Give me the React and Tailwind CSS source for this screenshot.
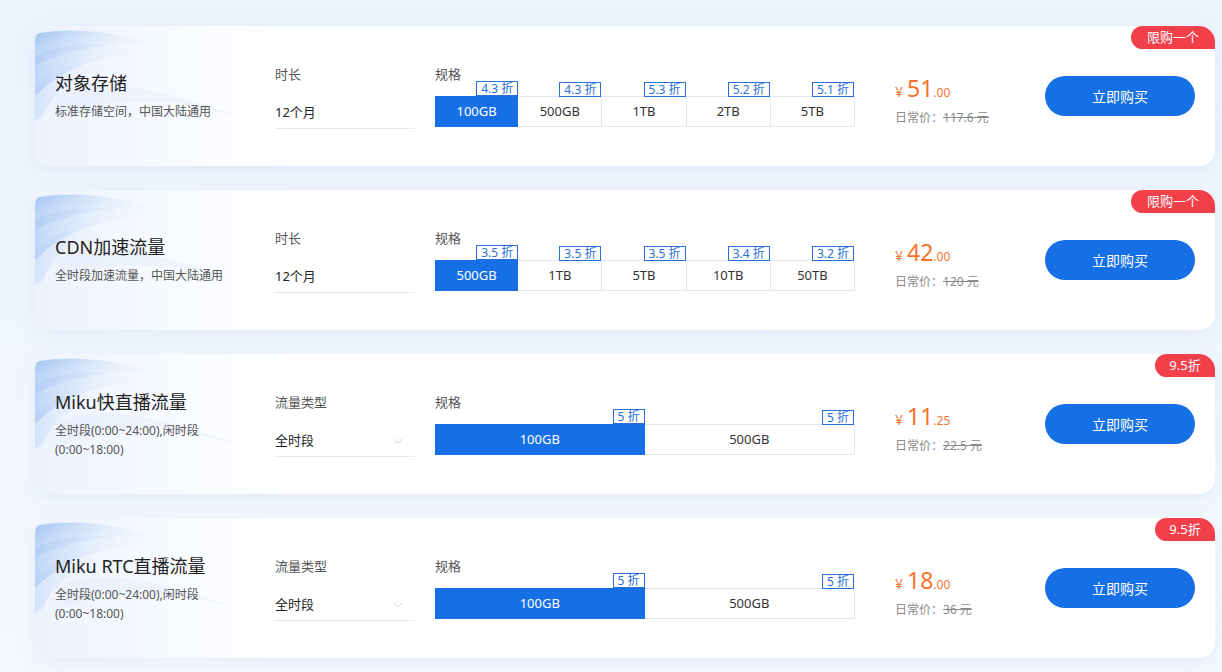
import React from "react";

const products = [
  {
    title: "对象存储",
    desc: ["标准存储空间，中国大陆通用"],
    label: "时长",
    value: "12个月",
    chevron: false,
    options: [
      ["100GB", "4.3 折"],
      ["500GB", "4.3 折"],
      ["1TB", "5.3 折"],
      ["2TB", "5.2 折"],
      ["5TB", "5.1 折"],
    ],
    price: "51",
    cents: ".00",
    orig: "117.6 元",
    badge: "限购一个",
  },
  {
    title: "CDN加速流量",
    desc: ["全时段加速流量，中国大陆通用"],
    label: "时长",
    value: "12个月",
    chevron: false,
    options: [
      ["500GB", "3.5 折"],
      ["1TB", "3.5 折"],
      ["5TB", "3.5 折"],
      ["10TB", "3.4 折"],
      ["50TB", "3.2 折"],
    ],
    price: "42",
    cents: ".00",
    orig: "120 元",
    badge: "限购一个",
  },
  {
    title: "Miku快直播流量",
    desc: ["全时段(0:00~24:00),闲时段", "(0:00~18:00)"],
    label: "流量类型",
    value: "全时段",
    chevron: true,
    options: [
      ["100GB", "5 折"],
      ["500GB", "5 折"],
    ],
    price: "11",
    cents: ".25",
    orig: "22.5 元",
    badge: "9.5折",
  },
  {
    title: "Miku RTC直播流量",
    desc: ["全时段(0:00~24:00),闲时段", "(0:00~18:00)"],
    label: "流量类型",
    value: "全时段",
    chevron: true,
    options: [
      ["100GB", "5 折"],
      ["500GB", "5 折"],
    ],
    price: "18",
    cents: ".00",
    orig: "36 元",
    badge: "9.5折",
  },
];

function Waves() {
  return (
    <svg
      className="absolute left-0 top-0 pointer-events-none"
      width="220"
      height="140"
      viewBox="0 0 220 140"
    >
      <defs>
        <linearGradient id="wg1" x1="0" y1="0" x2="1" y2="0.3">
          <stop offset="0" stopColor="#8fb7f0" stopOpacity="0.8" />
          <stop offset="0.45" stopColor="#c4d9f7" stopOpacity="0.4" />
          <stop offset="1" stopColor="#ffffff" stopOpacity="0" />
        </linearGradient>
        <linearGradient id="wg2" x1="0" y1="0" x2="1" y2="0">
          <stop offset="0" stopColor="#a9c7f4" stopOpacity="0.65" />
          <stop offset="1" stopColor="#ffffff" stopOpacity="0" />
        </linearGradient>
      </defs>
      <path d="M0 8 C40 0 90 6 150 28 C110 14 50 14 0 40 Z" fill="url(#wg1)" />
      <path d="M0 30 C30 14 80 14 130 30 C80 24 35 36 0 70 Z" fill="url(#wg2)" />
      <path d="M0 60 C20 40 50 34 90 40 C50 44 20 60 8 90 L0 95 Z" fill="url(#wg2)" opacity="0.55" />
      <path d="M20 70 C60 50 120 60 200 90 C130 70 70 70 30 90 Z" fill="#e3ecfa" opacity="0.45" />
    </svg>
  );
}

function Card({ p }) {
  const wide = p.options.length === 2;
  return (
    <div className="relative w-[1180px] h-[140px] rounded-[16px] bg-white shadow-[0_4px_18px_rgba(120,160,220,0.13)] flex items-center overflow-hidden">
      <div className="absolute left-0 top-0 bottom-0 w-[260px] rounded-l-[16px] bg-gradient-to-r from-[#edf3fd] via-[#f7faff] to-white">
        <Waves />
      </div>
      <div
        className={
          "absolute right-0 top-0 h-[23px] bg-[#f2404b] text-white text-[13px] flex items-center justify-center rounded-tr-[16px] rounded-tl-[14px] rounded-bl-[14px] " +
          (wide ? "w-[60px]" : "w-[84px]")
        }
      >
        {p.badge}
      </div>

      <div className="relative w-[240px] pl-[20px] flex flex-col">
        <div className="text-[18px] leading-[24px] text-[#222]">{p.title}</div>
        <div className="mt-[7px] text-[12px] leading-[19px] text-[#555]">
          {p.desc.map((d, i) => (
            <div key={i}>{d}</div>
          ))}
        </div>
      </div>

      <div className="relative w-[160px] flex flex-col mt-[2px]">
        <div className="text-[13px] leading-[18px] text-[#555]">{p.label}</div>
        <div className="mt-[15px] w-[140px] h-[31px] border-b border-[#e6e9ef] flex items-center justify-between">
          <span className="text-[13px] text-[#222]">{p.value}</span>
          {p.chevron && (
            <svg width="10" height="6" viewBox="0 0 10 6" className="mr-[12px]">
              <path d="M1 1 L5 5 L9 1" fill="none" stroke="#cfd3da" strokeWidth="1" />
            </svg>
          )}
        </div>
      </div>

      <div className="relative w-[460px] flex flex-col">
        <div className="text-[13px] leading-[18px] text-[#555]">规格</div>
        <div className="mt-[13px] flex w-[420px] h-[31px]">
          {p.options.map(([o, t], i) => (
            <div
              key={o}
              className={
                "relative flex-1 flex items-center justify-center text-[13px] " +
                (i === 0
                  ? "bg-[#176fe6] text-white"
                  : "border border-l-0 border-[#e3e8f0] text-[#333]")
              }
            >
              {o}
              <div className="absolute right-0 -top-[15px] h-[15px] px-[4px] bg-white border border-[#2a6fd9] text-[#2a6fd9] text-[12px] leading-[13px] flex items-center">
                {t}
              </div>
            </div>
          ))}
        </div>
      </div>

      <div className="relative w-[150px] flex flex-col mt-[9px]">
        <div className="flex items-baseline text-[#f5722c]">
          <span className="text-[14px] mr-[4px]">¥</span>
          <span className="text-[23px] leading-[28px]">{p.price}</span>
          <span className="text-[12px]">{p.cents}</span>
        </div>
        <div className="mt-[7px] text-[12px] leading-[18px] text-[#8a8a8a]">
          日常价：<span className="line-through">{p.orig}</span>
        </div>
      </div>

      <button className="relative w-[150px] h-[40px] rounded-full bg-[#176fe6] text-white text-[14px]">
        立即购买
      </button>
    </div>
  );
}

export default function App() {
  return (
    <div
      className="min-h-[672px] w-[1222px] bg-gradient-to-b from-[#ecf4fd] to-[#f5f9fe] pt-[26px] pl-[35px] flex flex-col gap-[24px]"
      style={{ fontFamily: '"Noto Sans", "Noto Sans CJK SC", sans-serif' }}
    >
      {products.map((p) => (
        <Card key={p.title} p={p} />
      ))}
    </div>
  );
}
